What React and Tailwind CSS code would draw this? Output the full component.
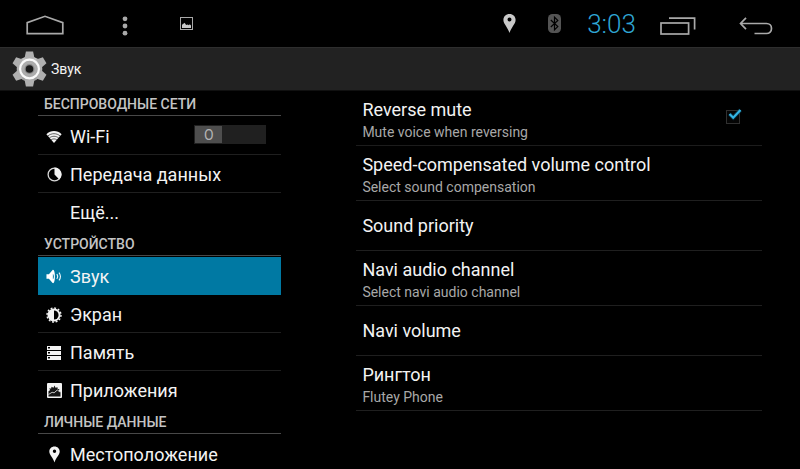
import React, { useState } from "react";

const sections = [
  {
    title: "БЕСПРОВОДНЫЕ СЕТИ",
    items: [
      { id: "wifi", label: "Wi-Fi", icon: WifiIcon, toggle: true },
      { id: "data", label: "Передача данных", icon: DataIcon },
      { id: "more", label: "Ещё..." },
    ],
  },
  {
    title: "УСТРОЙСТВО",
    items: [
      { id: "sound", label: "Звук", icon: SoundIcon },
      { id: "display", label: "Экран", icon: DisplayIcon },
      { id: "storage", label: "Память", icon: StorageIcon },
      { id: "apps", label: "Приложения", icon: AppsIcon },
    ],
  },
  {
    title: "ЛИЧНЫЕ ДАННЫЕ",
    items: [{ id: "location", label: "Местоположение", icon: PinIcon }],
  },
];

const preferences = [
  { title: "Speed-compensated volume control", summary: "Select sound compensation" },
  { title: "Sound priority" },
  { title: "Navi audio channel", summary: "Select navi audio channel" },
  { title: "Navi volume" },
  { title: "Рингтон", summary: "Flutey Phone" },
];

function App() {
  const [active, setActive] = useState("sound");
  const [wifi, setWifi] = useState(false);
  const [mute, setMute] = useState(true);

  return (
    <div className="h-screen flex flex-col overflow-hidden bg-black text-[#f3f3f3] font-['Roboto','Noto_Sans',sans-serif]">
      <StatusBar />
      <header className="shrink-0 h-11 flex items-center gap-1 pl-3 bg-[#222222] border-t border-t-[#2e2e2e] border-b border-b-[#101010]">
        <GearIcon />
        <h1 className="text-sm">Звук</h1>
      </header>

      <div className="flex-1 min-h-0 flex gap-[75px] px-[38px]">
        <nav className="flex-3 min-w-0">
          {sections.map((section) => (
            <section key={section.title}>
              <h2 className="h-[25px] mb-px pt-0.5 pl-1.5 flex items-center border-b border-[#484848] text-sm font-medium text-[#c4c4c4]">
                {section.title}
              </h2>
              <ul>
                {section.items.map((item, i) => (
                  <NavItem
                    key={item.id}
                    item={item}
                    active={item.id === active}
                    last={i === section.items.length - 1}
                    onSelect={() => setActive(item.id)}
                  >
                    {item.toggle && <Switch label={item.label} on={wifi} onChange={setWifi} />}
                  </NavItem>
                ))}
              </ul>
            </section>
          ))}
        </nav>

        <main className="flex-5 min-w-0">
          <label className="h-[55px] flex items-center justify-between pl-1.5 pr-[22px] border-b border-[#1c1c1c]">
            <PreferenceText title="Reverse mute" summary="Mute voice when reversing" />
            <span className="relative pb-0.5">
              <input
                type="checkbox"
                checked={mute}
                onChange={(e) => setMute(e.target.checked)}
                className="block appearance-none size-[14px] border border-[#303030] bg-[#050505]"
              />
              {mute && <CheckMark />}
            </span>
          </label>
          {preferences.map((pref) => (
            <button
              key={pref.title}
              type="button"
              className={`w-full flex items-center pl-1.5 text-left border-b border-[#1f1f1f] ${
                pref.summary ? "h-[55px]" : "h-[50px]"
              }`}
            >
              <PreferenceText title={pref.title} summary={pref.summary} />
            </button>
          ))}
        </main>
      </div>
    </div>
  );
}

function StatusBar() {
  return (
    <div className="shrink-0 h-[47px] flex items-stretch justify-between">
      <div className="flex">
        <button type="button" aria-label="Home" className="w-[90px] flex items-center justify-center pt-0.5">
          <svg width="38" height="20" viewBox="0 0 38 20" fill="none" stroke="#a9a9a9" strokeWidth="1.7">
            <path d="M1.2 18.6V7.6L19 1.3l17.8 6.3v11z" />
          </svg>
        </button>
        <button type="button" aria-label="Menu" className="w-[70px] flex items-center justify-center pt-1">
          <svg width="6" height="20" viewBox="0 0 6 20" fill="#a9a9a9">
            <circle cx="3" cy="2.8" r="2.4" />
            <circle cx="3" cy="10" r="2.4" />
            <circle cx="3" cy="17.2" r="2.4" />
          </svg>
        </button>
        <span className="w-[52px] flex items-center justify-center">
          <svg width="13" height="13" viewBox="0 0 13 13">
            <rect x="0.5" y="0.5" width="12" height="12" fill="none" stroke="#a8a8a8" />
            <path d="M2 11V8l1-1.2 1-.4.7-.6 1 1.6 1 .7 1-.6 1.2.7.9-1 1.2 1.2V11z" fill="#c9c9c9" />
          </svg>
        </span>
      </div>

      <div className="flex">
        <span className="w-10 flex items-center justify-center">
          <svg width="13" height="19" viewBox="0 0 13 19">
            <path
              fillRule="evenodd"
              fill="#c9c9c9"
              d="M6.5 0C2.9 0 .4 2.6.4 6c0 4 4.4 7.3 6.1 13C8.2 13.3 12.6 10 12.6 6c0-3.4-2.5-6-6.1-6zm0 3.4a2 2 0 1 1 0 4 2 2 0 0 1 0-4z"
            />
          </svg>
        </span>
        <span className="w-[50px] flex items-center justify-center">
          <svg width="13" height="19" viewBox="0 0 13 19">
            <rect width="13" height="19" rx="4.5" fill="#545454" />
            <path d="M2.8 6l7 6.6-3.3 3.2V3.2l3.3 3.2-7 6.600" fill="none" stroke="#000" strokeWidth="1.2" />
          </svg>
        </span>
        <time className="w-[65px] pt-0.5 flex items-center justify-center text-[26px] font-light text-[#2fa6d4]">
          3:03
        </time>
        <button type="button" aria-label="Recent apps" className="w-[68px] flex items-center justify-center pt-1">
          <svg width="36" height="18" viewBox="0 0 36 18" fill="none" stroke="#a9a9a9" strokeWidth="1.7">
            <rect x="1" y="6" width="27.6" height="11" />
            <path d="M9 1.2h25.6v11.3" />
          </svg>
        </button>
        <button type="button" aria-label="Back" className="w-[88px] flex items-center justify-center pt-1">
          <svg width="34" height="18" viewBox="0 0 34 18" fill="none" stroke="#a9a9a9" strokeWidth="1.7">
            <path d="M7 .8L1.5 6.5 7 12.200M1.500 6.500H27.500c3 0 5 2.200 5 5s-2 5-5 5H15.500" />
          </svg>
        </button>
      </div>
    </div>
  );
}

function NavItem({ item, active, last, onSelect, children }) {
  const Icon = item.icon;
  let border = "border-[#1f1f1f]";
  if (last) border = "border-transparent";
  if (active) border = "border-[#0079a3]";

  return (
    <li className={`h-[38px] flex items-center border-b ${border} ${active ? "bg-[#0079a3]" : ""}`}>
      <a
        href={`#${item.id}`}
        onClick={onSelect}
        aria-current={active ? "page" : undefined}
        className="flex-1 flex items-center gap-2 pt-0.5 pl-2 text-lg"
      >
        <span className="w-4 flex justify-center">{Icon && <Icon />}</span>
        {item.label}
      </a>
      {children}
    </li>
  );
}

function Switch({ label, on, onChange }) {
  return (
    <button
      type="button"
      role="switch"
      aria-label={label}
      aria-checked={on}
      onClick={() => onChange(!on)}
      className={`w-[72px] h-[19px] mr-[15px] mb-0.5 p-px flex bg-[#202020] ${on ? "justify-end" : ""}`}
    >
      <span className="w-[27px] h-[17px] pt-px flex items-center justify-center bg-[#4e4e4e] text-sm text-[#b5b5b5]">
        O
      </span>
    </button>
  );
}

function PreferenceText({ title, summary }) {
  return (
    <span className={summary ? "block pt-[3px]" : "block"}>
      <span className="block text-lg leading-6">{title}</span>
      {summary && <span className="block text-sm leading-5 text-[#a8a8a8]">{summary}</span>}
    </span>
  );
}

function CheckMark() {
  return (
    <svg className="absolute left-0.5 -top-1 pointer-events-none" width="15" height="15" viewBox="0 0 15 15" fill="none">
      <path d="M1.5 8l3.700 3.700L12.500 4" stroke="#0a4a66" strokeWidth="4" opacity="0.5" />
      <path d="M1.5 8l3.700 3.700L12.500 4" stroke="#33b5e5" strokeWidth="2.3" />
    </svg>
  );
}

function GearIcon() {
  return (
    <svg width="35" height="36" viewBox="-17.5 -18 35 36">
      <defs>
        <linearGradient id="gear" gradientUnits="userSpaceOnUse" x1="0" y1="-18" x2="0" y2="18">
          <stop offset="0" stopColor="#d2d2d2" />
          <stop offset="1" stopColor="#8e8e8e" />
        </linearGradient>
      </defs>
      <circle r="12.8" fill="url(#gear)" />
      {[0, 60, 120, 180, 240, 300].map((deg) => (
        <path key={deg} transform={`rotate(${deg})`} d="M-5-10.500l1.400-7h7.200l1.400 7z" fill="#b0b0b0" />
      ))}
      <circle r="9.4" fill="#acacac" stroke="#fafafa" strokeWidth="2.2" />
      <circle r="5" fill="#8a8a8a" />
      <circle r="3.8" fill="#1b1b1b" />
    </svg>
  );
}

function WifiIcon() {
  return (
    <svg width="16" height="14" viewBox="0 0 16 14">
      <path d="M8 13L.4 4.200C2.600 2.100 5.200 1 8 1s5.400 1.100 7.600 3.200z" fill="#f3f3f3" />
      <path
        d="M1.700 6.100c3.700-3.200 8.900-3.200 12.600 0M3.300 8c2.700-2.300 6.700-2.300 9.400 0M5 10c1.700-1.500 4.300-1.500 6 0"
        fill="none"
        stroke="#000"
        strokeWidth="0.6"
      />
    </svg>
  );
}

function DataIcon() {
  return (
    <svg width="15" height="15" viewBox="0 0 15 15">
      <circle cx="7.5" cy="7.5" r="6.4" fill="none" stroke="#d8d8d8" strokeWidth="1.3" />
      <path d="M7.500.5a7 7 0 0 1 4.800 12L7.500 7.500z" fill="#f3f3f3" />
    </svg>
  );
}

function SoundIcon() {
  return (
    <svg width="17" height="17" viewBox="0 0 17 17">
      <path d="M.5 6h2.600L7 1.500C8.500.500 9.500 4 9.500 8.500S8.500 16.500 7 15.500L3.100 11H.5z" fill="#fff" />
      <path d="M7.300 5.500c1.400 1.400 1.400 4.600 0 6z" fill="#0079a3" />
      <path
        d="M11.500 6c1 1.400 1 3.600 0 5M13.800 4.300c1.800 2.400 1.800 6 0 8.400"
        fill="none"
        stroke="#e3f2f7"
        strokeWidth="1.2"
      />
    </svg>
  );
}

function DisplayIcon() {
  return (
    <svg width="16" height="16" viewBox="-8 -8 16 16">
      <circle r="7" fill="none" stroke="#f3f3f3" strokeWidth="1.4" strokeDasharray="1.900 1.765" />
      <circle r="6.5" fill="#f3f3f3" />
      <path d="M0-4.600a4.600 4.600 0 0 1 0 9.200z" fill="#000" />
    </svg>
  );
}

function StorageIcon() {
  return (
    <svg width="14" height="14" viewBox="0 0 14 14">
      {[0, 5, 10].map((y) => (
        <g key={y}>
          <rect y={y} width="14" height="4" fill="#f3f3f3" />
          <rect x="1" y={y + 1} width="2" height="1.5" fill="#000" />
        </g>
      ))}
    </svg>
  );
}

function AppsIcon() {
  return (
    <svg width="15" height="15" viewBox="0 0 15 15">
      <rect width="15" height="15" rx="1" fill="#f3f3f3" />
      <path
        d="M1.500 13.500V8.200L3.300 7 2 5.500h2.200L4.500 3.800l2 .9L7.500 2.500l1 2.200 2-.5.200 1.700 1.800.3-.9 1.500 1.900 1.200v4.600z"
        fill="#161616"
      />
      <path d="M1.500 11.500l3.600-2.200 2 .5 3.200-2.800 3 2.200" fill="none" stroke="#f3f3f3" strokeWidth="0.8" />
    </svg>
  );
}

function PinIcon() {
  return (
    <svg width="11" height="17" viewBox="0 0 11 17">
      <path
        fillRule="evenodd"
        fill="#f3f3f3"
        d="M5.500.5C2.500.5.3 2.700.3 5.600.3 9.200 4.200 11.800 5.500 16.500 6.800 11.800 10.700 9.200 10.700 5.600c0-2.900-2.200-5.100-5.200-5.100zm0 3a1.700 1.700 0 1 1 0 3.400 1.700 1.700 0 0 1 0-3.400z"
      />
    </svg>
  );
}

export default App;
